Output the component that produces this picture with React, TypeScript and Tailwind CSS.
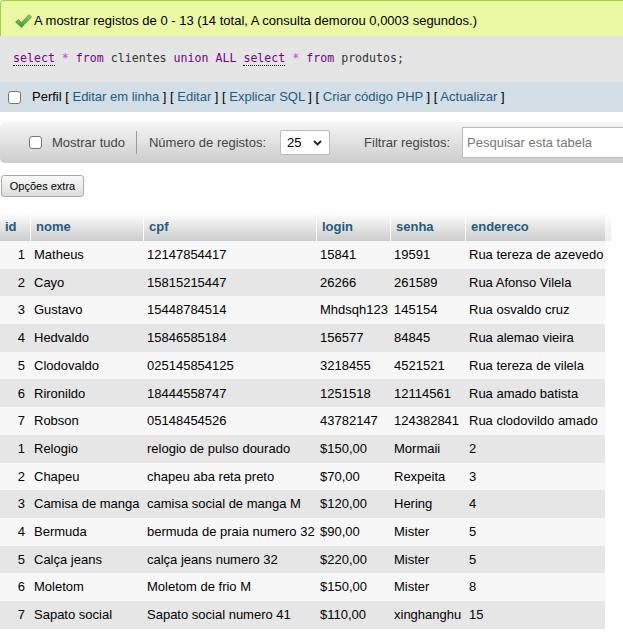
import React from "react";

const rows: string[][] = [
  ["1", "Matheus", "12147854417", "15841", "19591", "Rua tereza de azevedo"],
  ["2", "Cayo", "15815215447", "26266", "261589", "Rua Afonso Vilela"],
  ["3", "Gustavo", "15448784514", "Mhdsqh123", "145154", "Rua osvaldo cruz"],
  ["4", "Hedvaldo", "15846585184", "156577", "84845", "Rua alemao vieira"],
  ["5", "Clodovaldo", "025145854125", "3218455", "4521521", "Rua tereza de vilela"],
  ["6", "Rironildo", "18444558747", "1251518", "12114561", "Rua amado batista"],
  ["7", "Robson", "05148454526", "43782147", "124382841", "Rua clodovildo amado"],
  ["1", "Relogio", "relogio de pulso dourado", "$150,00", "Mormaii", "2"],
  ["2", "Chapeu", "chapeu aba reta preto", "$70,00", "Rexpeita", "3"],
  ["3", "Camisa de manga", "camisa social de manga M", "$120,00", "Hering", "4"],
  ["4", "Bermuda", "bermuda de praia numero 32", "$90,00", "Mister", "5"],
  ["5", "Calça jeans", "calça jeans numero 32", "$220,00", "Mister", "5"],
  ["6", "Moletom", "Moletom de frio M", "$150,00", "Mister", "8"],
  ["7", "Sapato social", "Sapato social numero 41", "$110,00", "xinghanghu", "15"],
];

const headers = ["id", "nome", "cpf", "login", "senha", "endereco"];

function Box() {
  return (
    <span className="inline-block w-[13px] h-[13px] rounded-[3px] border border-[#767676] bg-white shrink-0" />
  );
}

function Check() {
  return (
    <svg width="17" height="14" viewBox="0 0 17 14" className="shrink-0">
      <defs>
        <linearGradient id="g" x1="0" y1="0" x2="0" y2="1">
          <stop offset="0" stopColor="#8fd16a" />
          <stop offset="1" stopColor="#3f9a2c" />
        </linearGradient>
      </defs>
      <polygon points="0.5,8 3.5,5.5 6.5,8.5 14,0.5 16.5,3 6.5,13.5" fill="url(#g)" stroke="#3c8a2a" strokeWidth="0.6" strokeLinejoin="round" />
    </svg>
  );
}

export default function App() {
  const kw = "text-[#770088]";
  const op = "text-[#cc44cc]";
  const id = "text-[#333333]";
  return (
    <div
      className="w-[623px] h-[640px] overflow-hidden bg-white text-[13px] text-black"
      style={{ fontFamily: '"Liberation Sans", Arial, sans-serif' }}
    >
      {/* success message */}
      <div className="h-[36px] -mr-3 flex items-center border-t border-l border-[#a2d246] rounded-tl-[4px] bg-[#ebf8a4] pl-[14px] pt-[4px] whitespace-nowrap">
        <Check />
        <span className="ml-[2px]">A mostrar registos de 0 - 13 (14 total, A consulta demorou 0,0003 segundos.)</span>
      </div>

      {/* SQL */}
      <div className="h-[46px] bg-[#e5e5e5] flex items-center pl-[13px]">
        <span
          className="text-[11.6px] whitespace-pre"
          style={{ fontFamily: '"DejaVu Sans Mono", "Liberation Mono", monospace' }}
        >
          <span className={`${kw} border-b border-dotted border-black`}>select</span>
          <span className={op}> * </span>
          <span className={kw}>from</span>
          <span className={id}> clientes </span>
          <span className={kw}>union</span>
          <span className={id}> </span>
          <span className={kw}>ALL</span>
          <span className={id}> </span>
          <span className={`${kw} border-b border-dotted border-black`}>select</span>
          <span className={op}> * </span>
          <span className={kw}>from</span>
          <span className={id}> produtos;</span>
        </span>
      </div>

      {/* Perfil bar */}
      <div className="h-[30px] bg-[#d4dee6] flex items-center pl-[8px] whitespace-nowrap">
        <Box />
        <span className="ml-[11px] whitespace-pre">
          Perfil [ <span className="text-[#235a81]">Editar em linha</span> ] [{" "}
          <span className="text-[#235a81]">Editar</span> ] [{" "}
          <span className="text-[#235a81]">Explicar SQL</span> ] [{" "}
          <span className="text-[#235a81]">Criar código PHP</span> ] [{" "}
          <span className="text-[#235a81]">Actualizar</span> ]
        </span>
      </div>

      {/* navigation */}
      <div className="mt-[10px] h-[41px] w-[640px] rounded-l-[5px] bg-gradient-to-b from-[#f6f6f6] to-[#cdcdcd] flex items-center text-[#444] whitespace-nowrap">
        <span className="ml-[29px] flex shrink-0">
          <Box />
        </span>
        <span className="ml-[10px] shrink-0">Mostrar tudo</span>
        <span className="ml-[11px] w-px h-[23px] bg-[#9a9a9a] shrink-0" />
        <span className="ml-[12px] shrink-0">Número de registos:</span>
        <div className="ml-[14px] w-[50px] h-[25px] shrink-0 bg-white border border-[#bbb] rounded-[2px] flex items-center pl-[6px] text-black">
          <span>25</span>
          <svg width="9" height="6" viewBox="0 0 9 6" className="ml-[11px]">
            <path d="M1 1 L4.5 4.5 L8 1" fill="none" stroke="#222" strokeWidth="1.8" />
          </svg>
        </div>
        <span className="ml-[34px] shrink-0">Filtrar registos:</span>
        <div className="ml-[12px] w-[180px] h-[31px] shrink-0 bg-white border border-[#bbb] flex items-center pl-[4px] text-[#777]">
          Pesquisar esta tabela
        </div>
      </div>

      {/* options button */}
      <div className="mt-[12px] ml-[1px] w-[83px] h-[22px] rounded-[3px] border border-[#aaa] bg-gradient-to-b from-[#fafafa] to-[#dcdcdc] flex items-center justify-center text-[11px] text-black whitespace-nowrap">
        Opções extra
      </div>

      {/* table */}
      <div className="mt-[16px]">
        <div className="flex h-[28px]">
          <div className="grid grid-cols-[30px_113px_173px_74px_75px_140px] w-[605px] bg-gradient-to-b from-white to-[#cccccc]">
            {headers.map((h, i) => (
              <div
                key={h}
                className={`flex items-center font-bold text-[#235a81] ${i === 0 ? "pl-[5px]" : "border-l border-white pl-[5px]"}`}
              >
                {h}
              </div>
            ))}
          </div>
          <div className="w-[6px] bg-gradient-to-b from-white to-[#ececec]" />
        </div>
        {rows.map((r, ri) => (
          <div
            key={ri}
            className={`grid grid-cols-[30px_113px_173px_74px_75px_140px] w-[605px] h-[27.7px] ${ri % 2 === 0 ? "bg-[#f7f7f7]" : "bg-[#e6e6e6]"}`}
          >
            {r.map((c, ci) => (
              <div
                key={ci}
                className={`flex items-center whitespace-nowrap overflow-hidden ${ci === 0 ? "justify-end pr-[5px]" : "pl-[4px]"}`}
              >
                {c}
              </div>
            ))}
          </div>
        ))}
      </div>
    </div>
  );
}
